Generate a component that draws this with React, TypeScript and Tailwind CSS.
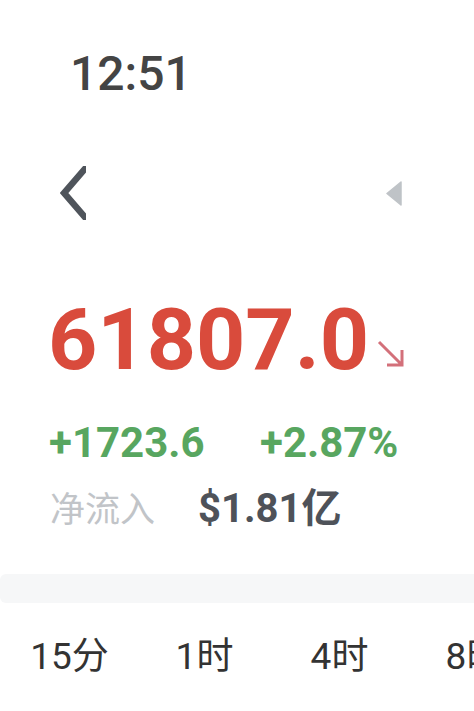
const sans = "font-['Roboto','Noto_Sans_CJK_SC',sans-serif]";

const tabs = ["15分", "1时", "4时", "8时"];

export default function App() {
  return (
    <div className={`h-[711px] w-[474px] overflow-hidden bg-white ${sans}`}>
      <div className="pl-[70px] pt-[50px] text-[48px] font-medium leading-none text-[#444444]">12:51</div>

      <div className="mt-[68px] flex h-[54px] items-center justify-between pl-[60px] pr-[72px]">
        <svg width="26" height="54" viewBox="0 0 26 54" className="overflow-hidden">
          <path d="M30 -3 L4 27 L30 57" fill="none" stroke="#4f545b" strokeWidth="6.5" strokeLinejoin="miter" />
        </svg>
        <svg width="16" height="25" viewBox="0 0 16 25">
          <path d="M15 1 L15 24 L1 12.5 Z" fill="#bfc3c7" stroke="#bfc3c7" strokeWidth="1.5" strokeLinejoin="round" />
        </svg>
      </div>

      <div className="mt-[77px] flex items-end pl-[48px]">
        <span className="text-[86px] font-bold leading-none text-[#d94b3c]">61807.0</span>
        <svg width="28" height="28" viewBox="0 0 28 28" className="mb-[15px] ml-[8px]">
          <path d="M2 2 L25 25 M10 25 L25 25 L25 10" fill="none" stroke="#d3707a" strokeWidth="3" />
        </svg>
      </div>

      <div className="mt-[39px] flex pl-[49px] text-[42px] font-bold leading-none text-[#58a660]">
        <span className="w-[211px]">+1723.6</span>
        <span>+2.87%</span>
      </div>

      <div className="mt-[25px] flex items-baseline pl-[50px] leading-none">
        <span className="w-[148px] text-[35px] text-[#c1c4c8]">净流入</span>
        <span className="text-[40px] font-bold text-[#4e5259]">$1.81亿</span>
      </div>

      <div className="mt-[45px] h-[29px] rounded-l-[6px] bg-[#f6f7f8]" />

      <div className="mt-[35px] flex pl-[2px] text-[37px] leading-none text-[#333333]">
        {tabs.map((t) => (
          <div key={t} className="flex w-[135px] shrink-0 justify-center">
            {t}
          </div>
        ))}
      </div>
    </div>
  );
}
